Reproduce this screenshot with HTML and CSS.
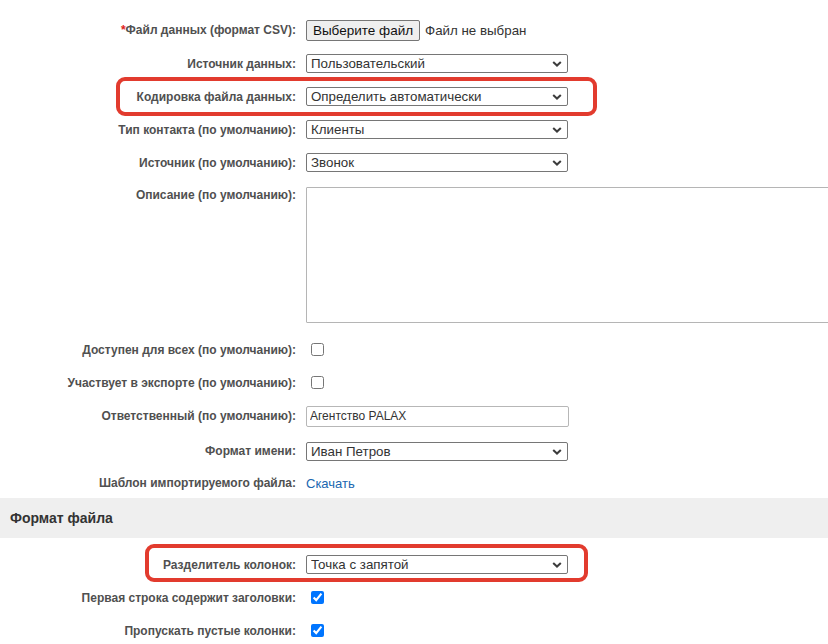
FILE: index.html
```html
<!DOCTYPE html>
<html lang="ru">
<head>
<meta charset="utf-8">
<title>Импорт контактов</title>
<link rel="stylesheet" href="styles.css">
</head>
<body>
<div class="page">
  <div class="form">
    <div class="row r-file">
      <div class="label"><span class="req">*</span>Файл данных (формат CSV):</div>
      <div class="control">
        <button class="file-btn" type="button">Выберите файл</button>
        <span class="file-none">Файл не выбран</span>
      </div>
    </div>
    <div class="row">
      <div class="label">Источник данных:</div>
      <div class="control">
        <div class="sel"><select><option>Пользовательский</option></select><svg class="chev" viewBox="0 0 10 6" width="10" height="6"><path d="M1.2 1 L5 4.6 L8.8 1" fill="none" stroke="#3c3c3c" stroke-width="2"/></svg></div>
      </div>
    </div>
    <div class="row">
      <div class="hl hl-enc"></div>
      <div class="label">Кодировка файла данных:</div>
      <div class="control">
        <div class="sel"><select><option>Определить автоматически</option></select><svg class="chev" viewBox="0 0 10 6" width="10" height="6"><path d="M1.2 1 L5 4.6 L8.8 1" fill="none" stroke="#3c3c3c" stroke-width="2"/></svg></div>
      </div>
    </div>
    <div class="row">
      <div class="label">Тип контакта (по умолчанию):</div>
      <div class="control">
        <div class="sel"><select><option>Клиенты</option></select><svg class="chev" viewBox="0 0 10 6" width="10" height="6"><path d="M1.2 1 L5 4.6 L8.8 1" fill="none" stroke="#3c3c3c" stroke-width="2"/></svg></div>
      </div>
    </div>
    <div class="row">
      <div class="label">Источник (по умолчанию):</div>
      <div class="control">
        <div class="sel"><select><option>Звонок</option></select><svg class="chev" viewBox="0 0 10 6" width="10" height="6"><path d="M1.2 1 L5 4.6 L8.8 1" fill="none" stroke="#3c3c3c" stroke-width="2"/></svg></div>
      </div>
    </div>
    <div class="row r-text">
      <div class="label">Описание (по умолчанию):</div>
      <div class="control">
        <textarea class="area"></textarea>
      </div>
    </div>
    <div class="row">
      <div class="label">Доступен для всех (по умолчанию):</div>
      <div class="control"><input class="chk" type="checkbox"></div>
    </div>
    <div class="row">
      <div class="label">Участвует в экспорте (по умолчанию):</div>
      <div class="control"><input class="chk" type="checkbox"></div>
    </div>
    <div class="row r-input">
      <div class="label">Ответственный (по умолчанию):</div>
      <div class="control"><input class="txt" type="text" value="Агентство PALAX"></div>
    </div>
    <div class="row r-name">
      <div class="label">Формат имени:</div>
      <div class="control">
        <div class="sel"><select><option>Иван Петров</option></select><svg class="chev" viewBox="0 0 10 6" width="10" height="6"><path d="M1.2 1 L5 4.6 L8.8 1" fill="none" stroke="#3c3c3c" stroke-width="2"/></svg></div>
      </div>
    </div>
    <div class="row r-tpl">
      <div class="label">Шаблон импортируемого файла:</div>
      <div class="control"><a class="link" href="#">Скачать</a></div>
    </div>
  </div>

  <div class="section">Формат файла</div>

  <div class="form form-2">
    <div class="row">
      <div class="hl hl-sep"></div>
      <div class="label">Разделитель колонок:</div>
      <div class="control">
        <div class="sel"><select><option>Точка с запятой</option></select><svg class="chev" viewBox="0 0 10 6" width="10" height="6"><path d="M1.2 1 L5 4.6 L8.8 1" fill="none" stroke="#3c3c3c" stroke-width="2"/></svg></div>
      </div>
    </div>
    <div class="row">
      <div class="label">Первая строка содержит заголовки:</div>
      <div class="control"><input class="chk" type="checkbox" checked></div>
    </div>
    <div class="row">
      <div class="label">Пропускать пустые колонки:</div>
      <div class="control"><input class="chk" type="checkbox" checked></div>
    </div>
  </div>
</div>
</body>
</html>
```

FILE: styles.css
```css
html, body {
  margin: 0;
  padding: 0;
  background: #ffffff;
  overflow: hidden;
}

body {
  font-family: "Liberation Sans", Arial, sans-serif;
  font-size: 13px;
  color: #333333;
}

.page {
  width: 828px;
  overflow: hidden;
}

.form {
  padding-top: 13px;
}

.form-2 {
  padding-top: 10px;
}

.row {
  position: relative;
  display: flex;
  align-items: center;
  height: 33px;
}

.r-file { height: 34px; }

.r-text {
  align-items: flex-start;
  height: auto;
  padding: 8px 0 10px;
}

.r-input { height: 34px; }
.r-name { height: 36px; }
.r-tpl { height: 28px; }

.label {
  width: 296px;
  flex: none;
  text-align: right;
  font-weight: bold;
  font-size: 12px;
  color: #505050;
  line-height: 16px;
}

.req {
  color: #e02020;
}

.control {
  margin-left: 10px;
  display: flex;
  align-items: center;
}

.file-btn {
  font-family: "Liberation Sans", Arial, sans-serif;
  font-size: 13.5px;
  color: #111;
  height: 21px;
  width: 114px;
  padding: 0;
  white-space: nowrap;
  background: #efefef;
  border: 1px solid #767676;
  border-radius: 2px;
}

.file-none {
  margin-left: 5px;
  font-size: 13.33px;
  color: #333;
  white-space: nowrap;
}

.sel {
  position: relative;
  width: 262px;
  height: 19px;
}

.sel select {
  appearance: none;
  -webkit-appearance: none;
  width: 262px;
  height: 19px;
  margin: 0;
  padding: 0 20px 0 4px;
  border: 1px solid #767676;
  border-radius: 2px;
  background: #ffffff;
  font-family: "Liberation Sans", Arial, sans-serif;
  font-size: 13.33px;
  color: #333333;
  line-height: 17px;
}

.chev {
  position: absolute;
  right: 6px;
  top: 7px;
  pointer-events: none;
}

.area {
  width: 560px;
  height: 136px;
  margin: 0;
  box-sizing: border-box;
  border: 1px solid #b5b5b5;
  border-radius: 1px;
  resize: none;
  background: #fff;
}

.chk {
  width: 13px;
  height: 13px;
  margin: 0 0 0 5px;
  accent-color: #0075ff;
}

.txt {
  width: 263px;
  height: 21px;
  box-sizing: border-box;
  margin: 0;
  padding: 0 3px;
  border: 1px solid #b7b7b7;
  border-radius: 2px;
  font-family: "Liberation Sans", Arial, sans-serif;
  font-size: 12px;
  color: #333;
}

.link {
  color: #2067b0;
  text-decoration: none;
  font-size: 13px;
}

.section {
  height: 40px;
  margin-top: 1px;
  box-sizing: border-box;
  padding-left: 10px;
  display: flex;
  align-items: center;
  background: #efefef;
  font-weight: bold;
  font-size: 14px;
  color: #333;
}

.hl {
  position: absolute;
  border: 4px solid #e23b2e;
  border-radius: 9px;
  box-sizing: border-box;
  pointer-events: none;
}

.hl-enc {
  left: 116px;
  width: 481px;
  top: -3px;
  bottom: -3px;
}

.hl-sep {
  left: 145px;
  width: 443px;
  top: -4px;
  bottom: -1px;
}
```
